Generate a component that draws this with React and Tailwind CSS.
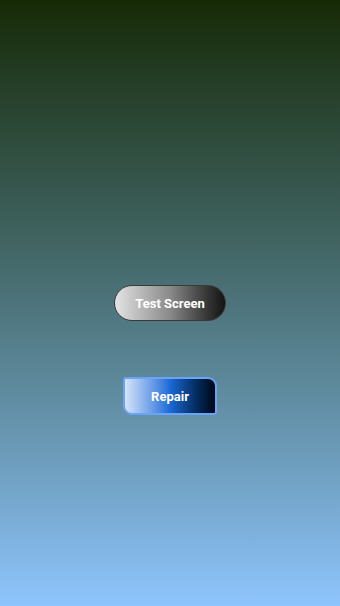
import React from 'react';

function App() {
    return (
        <div
            className="w-[340px] h-[606px] flex flex-col items-center bg-gradient-to-b from-[#172a05] to-[#8ec5fd] text-white"
            style={{ fontFamily: 'Roboto, "Liberation Sans", sans-serif' }}
        >
            {/* Test Screen pill */}
            <button className="mt-[285px] w-[112px] h-[36px] rounded-full border border-[#3a3a3a] bg-gradient-to-r from-[#e4e4e4] via-[#8a8a8a] to-[#141414] flex items-center justify-center">
                <span className="text-[13px] font-bold text-white pt-[1px]">Test Screen</span>
            </button>

            {/* Repair button */}
            <button className="mt-[56px] w-[94px] h-[38px] rounded-tl-[3px] rounded-tr-[9px] rounded-bl-[9px] rounded-br-[3px] border-2 border-[#6aa4f8] bg-gradient-to-r from-[#d6e4f8] via-[#1a6ad8] to-[#000818] flex items-center justify-center">
                <span className="text-[13px] font-bold text-white pt-[2px]">Repair</span>
            </button>
        </div>
    );
}

export default App;
